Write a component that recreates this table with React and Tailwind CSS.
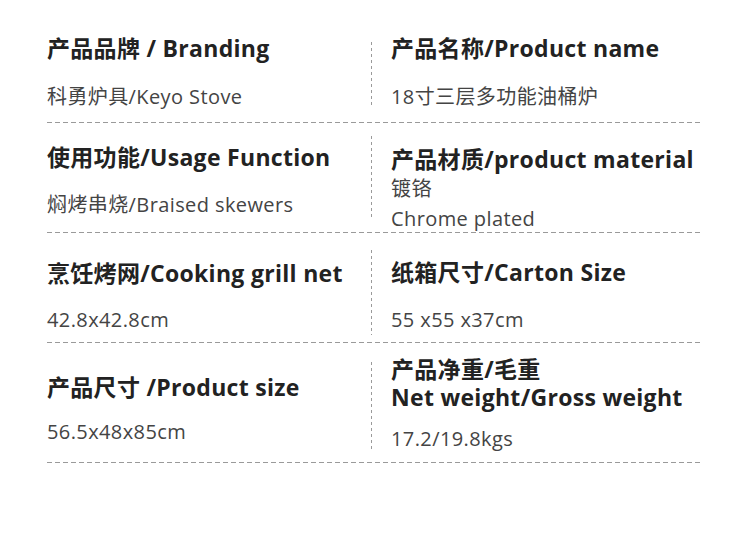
import React from "react";

const FONT = "font-['Open_Sans','Noto_Sans_CJK_SC',sans-serif]";

function HLine() {
  return (
    <div className="ml-[47px] w-[653px] h-px bg-[repeating-linear-gradient(to_right,#9a9a9a_0_5px,transparent_5px_8px)]" />
  );
}

function VLine({ className }) {
  return (
    <div
      className={
        "w-px shrink-0 bg-[repeating-linear-gradient(to_bottom,#9a9a9a_0_3px,transparent_3px_6px)] " +
        className
      }
    />
  );
}

const T = "text-[23px] leading-[30px] font-bold text-[#222] tracking-[0.3px] whitespace-nowrap";
const V = "text-[20px] leading-[26px] text-[#444] tracking-[0.4px] whitespace-nowrap";

export default function App() {
  return (
    <div className={"w-[750px] h-[557px] bg-white " + FONT}>
      {/* Row 1 */}
      <div className="flex h-[122px]">
        <div className="w-[371px] shrink-0 pl-[47px] pt-[33px] flex flex-col gap-[21px]">
          <div className={T}>产品品牌 / Branding</div>
          <div className={V}>科勇炉具/Keyo Stove</div>
        </div>
        <VLine className="mt-[42px] h-[66px]" />
        <div className="pl-[19px] pt-[33px] flex flex-col gap-[21px]">
          <div className={T}>产品名称/Product name</div>
          <div className={V}>18寸三层多功能油桶炉</div>
        </div>
      </div>
      <HLine />
      {/* Row 2 */}
      <div className="flex h-[109px]">
        <div className="w-[371px] shrink-0 pl-[47px] pt-[19px] flex flex-col gap-[20px]">
          <div className={T}>使用功能/Usage Function</div>
          <div className={V}>焖烤串烧/Braised skewers</div>
        </div>
        <VLine className="mt-[13px] h-[82px]" />
        <div className="pl-[19px] pt-[21px] flex flex-col">
          <div className={T}>产品材质/product material</div>
          <div className={V + " !leading-[30px]"}>
            镀铬
            <br />
            Chrome plated
          </div>
        </div>
      </div>
      <HLine />
      {/* Row 3 */}
      <div className="flex h-[109px]">
        <div className="w-[371px] shrink-0 pl-[47px] pt-[25px] flex flex-col gap-[19px]">
          <div className={T}>烹饪烤网/Cooking grill net</div>
          <div className={V}>42.8x42.8cm</div>
        </div>
        <VLine className="mt-[17px] h-[85px]" />
        <div className="pl-[19px] pt-[24px] flex flex-col gap-[20px]">
          <div className={T}>纸箱尺寸/Carton Size</div>
          <div className={V}>55 x55 x37cm</div>
        </div>
      </div>
      <HLine />
      {/* Row 4 */}
      <div className="flex h-[119px]">
        <div className="w-[371px] shrink-0 pl-[47px] pt-[29px] flex flex-col gap-[17px]">
          <div className={T}>产品尺寸 /Product size</div>
          <div className={V}>56.5x48x85cm</div>
        </div>
        <VLine className="mt-[19px] h-[88px]" />
        <div className="pl-[19px] pt-[12px] flex flex-col">
          <div className={T + " !leading-[28px]"}>
            产品净重/毛重
            <br />
            Net weight/Gross weight
          </div>
          <div className={V + " mt-[15px]"}>17.2/19.8kgs</div>
        </div>
      </div>
      <HLine />
    </div>
  );
}
